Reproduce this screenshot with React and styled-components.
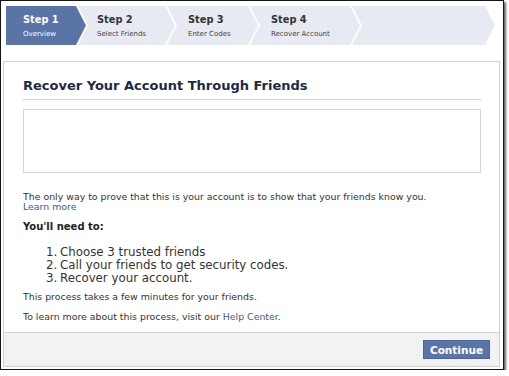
import React from "react";
import styled, { createGlobalStyle } from "styled-components";

const Global = createGlobalStyle`
  html, body { margin: 0; padding: 0; background: #ffffff; }
  body { font-family: "DejaVu Sans", "Noto Sans", sans-serif; }
  * { box-sizing: border-box; }
`;

const Frame = styled.div`
  width: 504px;
  height: 370px;
  border: 1px solid #151515;
  box-shadow: 2px 2px 2px rgba(0, 0, 0, 0.6);
  background: #ffffff;
  padding: 5px 3px 0 2px;
  display: flex;
  flex-direction: column;
`;

const StepBar = styled.div`
  display: flex;
  height: 39px;
  margin: 0 5px 0 3px;
`;

const Step = styled.div`
  flex: ${(p) => (p.$grow ? "1 1 auto" : `0 0 ${p.$w}px`)};
  margin-left: ${(p) => (p.$first ? "0" : "-8px")};
  background: ${(p) => (p.$active ? "#5b74a8" : "#e7eaf2")};
  clip-path: ${(p) =>
    p.$first
      ? "polygon(0 0, calc(100% - 10px) 0, 100% 50%, calc(100% - 10px) 100%, 0 100%)"
      : "polygon(0 0, calc(100% - 10px) 0, 100% 50%, calc(100% - 10px) 100%, 0 100%, 10px 50%)"};
  padding: 8px 0 0 ${(p) => p.$pad}px;
  display: flex;
  flex-direction: column;
`;

const StepTitle = styled.div`
  font-size: 9.8px;
  line-height: 12px;
  font-weight: bold;
  color: ${(p) => (p.$active ? "#ffffff" : "#333333")};
  white-space: nowrap;
`;

const StepSub = styled.div`
  margin-top: 4px;
  font-size: 7px;
  line-height: 8px;
  color: ${(p) => (p.$active ? "#ffffff" : "#444444")};
  white-space: nowrap;
`;

const Panel = styled.div`
  margin-top: 16px;
  width: 497px;
  border: 1px solid #cfcfcf;
  background: #ffffff;
  display: flex;
  flex-direction: column;
`;

const Body = styled.div`
  padding: 16px 18px 10px 19px;
  display: flex;
  flex-direction: column;
`;

const Heading = styled.h2`
  margin: 0;
  padding-bottom: 5px;
  border-bottom: 1px solid #d4d4d4;
  font-size: 13px;
  line-height: 16px;
  font-weight: bold;
  color: #1c2a47;
`;

const Box = styled.div`
  margin-top: 9px;
  height: 64px;
  border: 1px solid #d6d6d6;
  background: #ffffff;
`;

const Para = styled.p`
  margin: ${(p) => p.$mt}px 0 0;
  font-size: 9.4px;
  line-height: 10px;
  color: #333333;
`;

const Link = styled.a`
  color: #3b5998;
  text-decoration: none;
`;

const Need = styled.div`
  margin-top: 9px;
  font-size: 10px;
  line-height: 12px;
  font-weight: bold;
  color: #222222;
`;

const List = styled.ol`
  margin: 13px 0 0;
  padding: 0;
  list-style: none;
`;

const Item = styled.li`
  display: flex;
  font-size: 11.8px;
  line-height: 13px;
  color: #333333;
`;

const Num = styled.span`
  width: 37px;
  padding-left: 23px;
  flex: 0 0 auto;
`;

const Footer = styled.div`
  height: 34px;
  border-top: 1px solid #d4d4d4;
  background: #f2f2f2;
  display: flex;
  align-items: center;
  justify-content: flex-end;
  padding-right: 9px;
`;

const Button = styled.button`
  width: 67px;
  height: 19px;
  padding: 0;
  border: 1px solid #4a64a0;
  background: #5b74a8;
  color: #ffffff;
  font-family: "DejaVu Sans", "Noto Sans", sans-serif;
  font-size: 10.5px;
  font-weight: bold;
  cursor: pointer;
`;

const steps = [
  { title: "Step 1", sub: "Overview", w: 80, pad: 17, active: true },
  { title: "Step 2", sub: "Select Friends", w: 97, pad: 19 },
  { title: "Step 3", sub: "Enter Codes", w: 91, pad: 21 },
  { title: "Step 4", sub: "Recover Account", w: 110, pad: 21 },
];

const items = [
  "Choose 3 trusted friends",
  "Call your friends to get security codes.",
  "Recover your account.",
];

export default function App() {
  return (
    <>
      <Global />
      <Frame>
        <StepBar>
          {steps.map((s, i) => (
            <Step key={s.title} $first={i === 0} $w={s.w} $pad={s.pad} $active={s.active}>
              <StepTitle $active={s.active}>{s.title}</StepTitle>
              <StepSub $active={s.active}>{s.sub}</StepSub>
            </Step>
          ))}
          <Step $grow $pad={0} />
        </StepBar>
        <Panel>
          <Body>
            <Heading>Recover Your Account Through Friends</Heading>
            <Box />
            <Para $mt={19}>
              The only way to prove that this is your account is to show that your friends know you.
              <br />
              <Link href="#">Learn more</Link>
            </Para>
            <Need>You'll need to:</Need>
            <List>
              {items.map((t, i) => (
                <Item key={t}>
                  <Num>{i + 1}.</Num>
                  <span>{t}</span>
                </Item>
              ))}
            </List>
            <Para $mt={7}>This process takes a few minutes for your friends.</Para>
            <Para $mt={10}>
              To learn more about this process, visit our <Link href="#">Help Center</Link>.
            </Para>
          </Body>
          <Footer>
            <Button>Continue</Button>
          </Footer>
        </Panel>
      </Frame>
    </>
  );
}
